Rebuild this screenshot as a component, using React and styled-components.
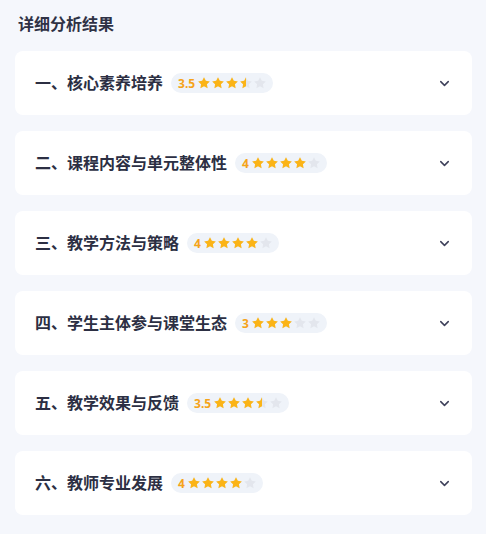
import React from 'react';
import styled, { createGlobalStyle } from 'styled-components';
import { ChevronDown } from 'lucide-react';

const GlobalStyle = createGlobalStyle`
  body {
    margin: 0;
    background: #f5f7fc;
    font-family: "Noto Sans", "Noto Sans CJK SC", sans-serif;
  }
`

const Page = styled.div`
  padding: 12px 14px 19px 15px;
`

const Heading = styled.h2`
  margin: 0 0 15px 3px;
  font-size: 16px;
  line-height: 24px;
  font-weight: 700;
  color: #2f3245;
`

const List = styled.div`
  display: flex;
  flex-direction: column;
  gap: 16px;
`

const Card = styled.div`
  height: 64px;
  background: #ffffff;
  border-radius: 8px;
  display: flex;
  align-items: center;
  padding: 0 20px;
  color: #2c2f43;
`

const Title = styled.div`
  font-size: 16px;
  font-weight: 700;
  line-height: 22px;
`

const Badge = styled.div`
  margin-left: 8px;
  height: 20px;
  padding: 0 6px 0 7px;
  border-radius: 10px;
  background: #eff3f9;
  display: flex;
  align-items: center;
`

const Score = styled.span`
  font-size: 12px;
  font-weight: 700;
  color: #f5a31a;
  margin-right: 2px;
`

const Stars = styled.div`
  display: flex;
`

const Toggle = styled.div`
  margin-left: auto;
  display: flex;
  color: #3e405a;
`

const STAR = "M12 2l3.09 6.26L22 9.27l-5 4.87 1.18 6.88L12 17.77l-6.18 3.25L7 14.14 2 9.27l6.91-1.01L12 2z";

function Star({ fill, id }) {
  return (
    <svg width="14" height="14" viewBox="0 0 24 24">
      <defs>
        <clipPath id={id}>
          <rect x="0" y="0" width={24 * fill} height="24" />
        </clipPath>
      </defs>
      <path d={STAR} fill="#e3e6ed" />
      {fill > 0 && <path d={STAR} fill="#fbb417" clipPath={`url(#${id})`} />}
    </svg>
  );
}

const sections = [
  { title: "一、核心素养培养", score: 3.5 },
  { title: "二、课程内容与单元整体性", score: 4 },
  { title: "三、教学方法与策略", score: 4 },
  { title: "四、学生主体参与课堂生态", score: 3 },
  { title: "五、教学效果与反馈", score: 3.5 },
  { title: "六、教师专业发展", score: 4 },
];

function App() {
  return (
    <Page>
      <GlobalStyle />
      <Heading>详细分析结果</Heading>
      <List>
        {sections.map((s, i) => (
          <Card key={`SEC-${i}`}>
            <Title>{s.title}</Title>
            <Badge>
              <Score>{s.score}</Score>
              <Stars>
                {[0, 1, 2, 3, 4].map((n) => (
                  <Star key={n} id={`clip-${i}-${n}`} fill={Math.max(0, Math.min(1, s.score - n))} />
                ))}
              </Stars>
            </Badge>
            <Toggle>
              <ChevronDown size={15} strokeWidth={2.4} />
            </Toggle>
          </Card>
        ))}
      </List>
    </Page>
  );
}

export default App;
